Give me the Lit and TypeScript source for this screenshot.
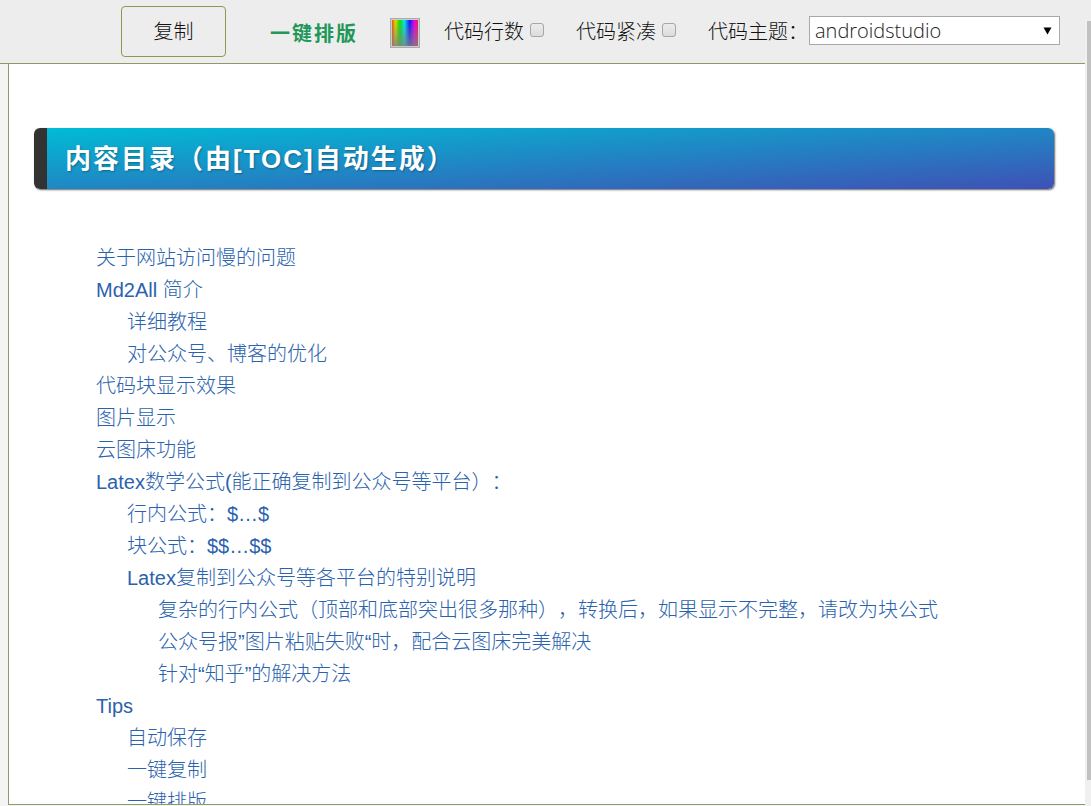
import { LitElement, html, css, nothing, TemplateResult } from "lit";
import { customElement } from "lit/decorators.js";

interface TocItem {
  text: string;
  children?: TocItem[];
}

const TOC: TocItem[] = [
  { text: "关于网站访问慢的问题" },
  {
    text: "Md2All 简介",
    children: [{ text: "详细教程" }, { text: "对公众号、博客的优化" }],
  },
  { text: "代码块显示效果" },
  { text: "图片显示" },
  { text: "云图床功能" },
  {
    text: "Latex数学公式(能正确复制到公众号等平台）：",
    children: [
      { text: "行内公式：$…$" },
      { text: "块公式：$$…$$" },
      {
        text: "Latex复制到公众号等各平台的特别说明",
        children: [
          { text: "复杂的行内公式（顶部和底部突出很多那种），转换后，如果显示不完整，请改为块公式" },
          { text: "公众号报”图片粘贴失败“时，配合云图床完美解决" },
          { text: "针对“知乎”的解决方法" },
        ],
      },
    ],
  },
  {
    text: "Tips",
    children: [{ text: "自动保存" }, { text: "一键复制" }, { text: "一键排版" }],
  },
];

@customElement("tool-bar")
class ToolBar extends LitElement {
  static styles = css`
    :host {
      display: block;
      font: 300 20px/30px "Open Sans", "Noto Sans CJK SC", sans-serif;
      color: #111;
    }
    .bar {
      display: flex;
      align-items: center;
      box-sizing: border-box;
      height: 64px;
      padding: 0 25px 0 121px;
      background: #ededed;
      border-bottom: 1px solid #8f9a6b;
    }
    .copy {
      box-sizing: border-box;
      width: 105px;
      height: 51px;
      margin: 0;
      padding: 0;
      border: 1px solid #8a9a50;
      border-radius: 4px;
      background: transparent;
      color: inherit;
      font: inherit;
    }
    .format {
      margin-left: 44px;
      padding-top: 4px;
      color: #21985a;
      font-weight: 700;
      letter-spacing: 2px;
      text-decoration: none;
      white-space: nowrap;
    }
    .swatch {
      flex: none;
      box-sizing: border-box;
      width: 30px;
      height: 30px;
      margin: 2px 0 0 32px;
      padding: 1px;
      border: 1px solid #aaa;
      background: #ccc;
    }
    .spectrum {
      display: block;
      width: 100%;
      height: 100%;
    }
    .option {
      display: flex;
      align-items: center;
      gap: 6px;
      margin-left: 32px;
      white-space: nowrap;
    }
    .first {
      margin-left: 24px;
    }
    .check {
      appearance: none;
      box-sizing: border-box;
      width: 14px;
      height: 14px;
      margin: 0 0 4px;
      border: 1px solid #a6a6a6;
      border-radius: 3px;
      background: linear-gradient(#ececec, #dcdcdc);
    }
    .check:checked {
      background: #21985a;
    }
    .theme {
      margin-left: 32px;
      white-space: nowrap;
    }
    .picker {
      position: relative;
      flex: 1;
      min-width: 0;
      margin: 0 0 2px 1px;
    }
    .select {
      display: block;
      appearance: none;
      box-sizing: border-box;
      width: 100%;
      height: 29px;
      margin: 0;
      padding: 0 24px 0 5px;
      border: 1px solid #a9a9a9;
      border-radius: 0;
      background: #fff;
      color: #222;
      font: inherit;
      line-height: 27px;
    }
    .arrow {
      position: absolute;
      top: 11px;
      right: 8px;
      width: 9px;
      height: 8px;
      pointer-events: none;
    }
  `;

  render() {
    return html`
      <header class="bar">
        <button class="copy" type="button">复制</button>
        <a class="format" href="#format">一键排版</a>
        <button class="swatch" type="button" aria-label="颜色">
          <svg class="spectrum" viewBox="0 0 26 26" preserveAspectRatio="none">
            <defs>
              <linearGradient id="hue">
                <stop offset="0" stop-color="#ff4a00" />
                <stop offset=".13" stop-color="#e8d800" />
                <stop offset=".3" stop-color="#00e800" />
                <stop offset=".48" stop-color="#00e8f0" />
                <stop offset=".68" stop-color="#1010ff" />
                <stop offset=".86" stop-color="#e800e8" />
                <stop offset="1" stop-color="#ff1060" />
              </linearGradient>
              <linearGradient id="fade" x2="0" y2="1">
                <stop offset="0" stop-color="#808080" stop-opacity="0" />
                <stop offset="1" stop-color="#808080" stop-opacity=".8" />
              </linearGradient>
            </defs>
            <rect width="26" height="26" fill="url(#hue)" />
            <rect width="26" height="26" fill="url(#fade)" />
          </svg>
        </button>
        <label class="option first">代码行数<input class="check" type="checkbox" /></label>
        <label class="option">代码紧凑<input class="check" type="checkbox" /></label>
        <label class="theme" for="theme">代码主题：</label>
        <div class="picker">
          <select class="select" id="theme">
            <option>androidstudio</option>
          </select>
          <svg class="arrow" viewBox="0 0 9 8"><path d="M0.5 0.5h8L4.5 7.5z" fill="#000" /></svg>
        </div>
      </header>
    `;
  }
}

@customElement("toc-preview")
class TocPreview extends LitElement {
  static styles = css`
    :host {
      display: block;
      overflow: hidden;
      font: 300 20px/32px "Liberation Sans", "Noto Sans CJK SC", sans-serif;
      text-spacing-trim: space-all;
    }
    .title {
      margin: 64px 31px 0 25px;
      padding: 11px 18px 10px;
      border-left: 13px solid #333;
      border-radius: 6px;
      background: linear-gradient(to right bottom, #00bcd4, #3f51b5);
      box-shadow: 1px 1px 2px rgba(0, 0, 0, 0.6);
      color: #fff;
      font-size: 26px;
      font-weight: 700;
      line-height: 40px;
      letter-spacing: 2px;
      text-shadow: 1px 1px 2px rgba(0, 0, 0, 0.3);
    }
    .list {
      list-style: none;
      margin: 0;
      padding: 0 0 0 31px;
    }
    .root {
      margin-top: 53px;
      padding-left: 87px;
    }
    .link {
      color: #2a62ae;
      text-decoration: none;
    }
  `;

  private list(items: TocItem[], root = false): TemplateResult {
    return html`<ul class=${root ? "list root" : "list"}>
      ${items.map(
        (item) => html`<li>
          <a class="link" href="#toc">${item.text}</a>
          ${item.children ? this.list(item.children) : nothing}
        </li>`
      )}
    </ul>`;
  }

  render() {
    return html`
      <h1 class="title">内容目录（由[TOC]自动生成）</h1>
      ${this.list(TOC, true)}
    `;
  }
}

@customElement("app-root")
class AppRoot extends LitElement {
  static styles = css`
    :host {
      display: flex;
      height: 100vh;
      overflow: hidden;
      background: #f0f0f0;
    }
    .main {
      flex: 1;
      min-width: 0;
      display: flex;
      flex-direction: column;
    }
    .body {
      flex: 1;
      min-height: 0;
      display: flex;
      padding: 0 0 1px 8px;
      background: #f4f4f4;
    }
    .preview {
      flex: 1;
      min-width: 0;
      background: #fff;
      border-left: 1px solid #8f9a6b;
      border-bottom: 1px solid #8f9a6b;
    }
    .track {
      display: flex;
      width: 4px;
      padding: 21px 0 26px 2px;
      background: linear-gradient(#ededed 21px, #f0f0f0 21px);
    }
    .thumb {
      flex: 1;
      background: #c1c1c1;
    }
  `;

  render() {
    return html`
      <div class="main">
        <tool-bar></tool-bar>
        <div class="body"><toc-preview class="preview"></toc-preview></div>
      </div>
      <div class="track"><div class="thumb"></div></div>
    `;
  }
}
